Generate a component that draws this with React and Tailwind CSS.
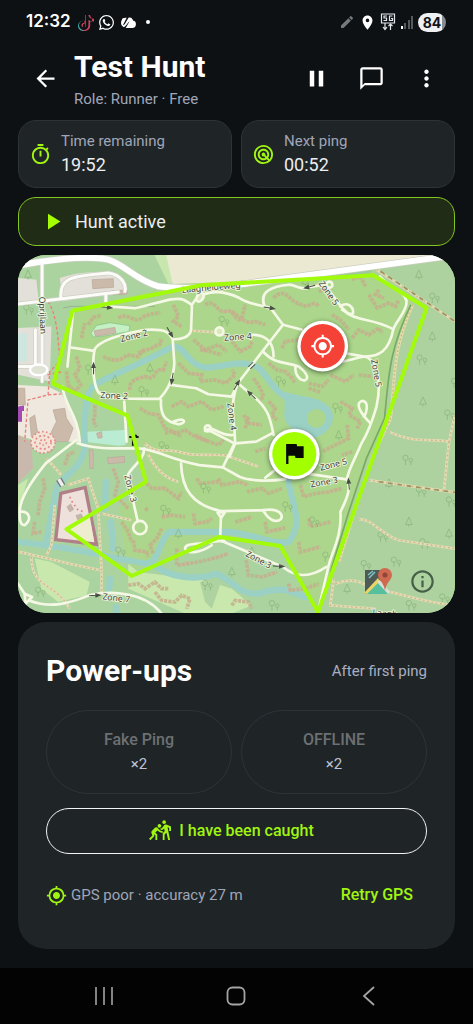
import React from "react";
import {
  MdArrowBack,
  MdPause,
  MdChatBubbleOutline,
  MdMoreVert,
  MdOutlineTimer,
  MdRadar,
  MdPlayArrow,
  MdFlag,
  MdMyLocation,
  MdSportsKabaddi,
  MdInfoOutline,
  MdEdit,
  MdLocationOn,
} from "react-icons/md";
import { FaWhatsapp, FaTiktok } from "react-icons/fa";

// Map geometry, in the units of the map's viewBox (1308 x 1074)
const water = [
  "M198 560C200 420 210 400 243 382C330 340 400 310 463 275C500 270 510 340 570 338C610 335 650 320 690 328C740 330 750 400 800 425L860 450",
  "M808 670C815 740 860 800 810 860C760 870 700 835 633 830L453 830C420 860 420 920 390 925C300 915 200 880 0 860",
  "M403 925C450 970 540 975 593 955C640 970 660 1020 720 1015C790 990 820 1010 860 1025",
  "M200 575C190 650 130 660 115 700L85 860",
  "M263 680L260 760",
  "M278 800L285 880",
  "M275 970L273 1000",
  "M293 1055L293 1074",
];

const roads = [
  "M165 170L148 335",
  "M263 155L353 160C420 145 470 125 495 135C525 150 521 150 520 170L518 225C515 250 480 255 463 253C450 230 440 222 383 225C320 235 230 260 228 290C220 350 230 400 243 415C270 432 330 432 423 432C450 405 465 370 468 325L463 253",
  "M158 278L228 288",
  "M458 390L533 400L570 418L640 425L658 385L793 210L760 165L738 155",
  "M521 150C540 110 600 100 663 130C690 148 720 150 758 160",
  "M738 155C720 110 760 95 813 90C830 90 850 110 873 97L920 90C940 120 960 150 985 175C1020 200 1060 190 1123 223",
  "M965 155C985 140 1005 155 1003 175C995 185 980 170 970 165",
  "M1083 65C1110 100 1160 110 1163 140C1165 170 1130 200 1123 225C1110 290 1080 305 1038 305C1000 310 980 325 933 325",
  "M793 210L850 225",
  "M985 296L1045 307C1085 330 1085 400 1073 455C1060 500 1050 530 1028 565C1010 610 990 640 985 670C995 700 990 720 965 770C970 840 940 890 930 930L900 1060",
  "M1055 505C1030 480 1005 445 1030 438C1055 440 1040 480 1035 485",
  "M703 240C745 240 765 265 765 305",
  "M733 290C770 330 800 320 840 335C880 365 865 385 845 373C830 360 830 350 830 332",
  "M658 385L700 420C750 460 755 490 765 540",
  "M658 385C640 430 640 470 648 525L650 565L633 605",
  "M560 528C580 505 600 545 645 540",
  "M650 565L713 560L760 535",
  "M570 525L648 565L613 637",
  "M178 565C250 590 350 575 378 582C440 595 460 615 543 630L613 637L663 665C700 680 760 678 800 672",
  "M740 668L775 640",
  "M860 655L983 673",
  "M488 625C490 700 520 750 608 768L733 765C800 755 800 800 770 797C750 795 740 775 733 765",
  "M608 768L605 850",
  "M605 855C550 870 500 860 500 880C510 900 550 890 580 870",
  "M605 855L663 880L793 935C830 965 870 970 923 935",
  "M378 580C378 620 330 640 328 665L358 797",
  "M428 435C425 480 440 500 480 508C505 505 500 490 480 495L465 500",
  "M318 440L325 560",
  "M133 395C140 455 180 480 185 560",
  "M175 555L83 625C30 690 5 740 5 770C30 765 45 790 20 810C5 810 5 790 5 770",
  "M0 985L33 1035C100 1060 150 1045 213 1020C280 1005 380 1010 430 1075",
];

const tracks = [
  "M1073 45L1308 200",
  "M1050 675L1308 712",
  "M520 228L590 232",
  "M378 565C420 600 430 580 480 590C540 610 600 590 633 605L720 635",
  "M388 595C410 640 440 670 480 680",
  "M1020 792C1060 790 1090 840 1140 855L1308 880",
  "M1110 530C1180 565 1230 550 1290 560L1308 480",
  "M1290 560L1275 705",
  "M950 985C1000 965 1030 980 1060 1000C1140 1010 1200 1040 1308 1050",
  "M945 970L935 1050L1070 1060",
  "M0 890C80 905 160 930 250 945L250 1020",
  "M250 945L240 760L210 670L150 690",
  "M40 905C40 1000 110 980 155 1060",
  "M250 775L340 795",
  "M85 900L100 870L110 750",
  "M85 610L130 660",
];

const redPaths = [
  "M90 140C115 180 120 240 125 320L95 350L90 420L30 435L20 560",
  "M90 420L130 417",
  "M88 360L133 350",
];

const houses = [
  "M210 210L225 188L250 182", "M190 250L195 225L200 205",
  "M300 190C330 170 350 210 370 190C390 175 410 180 425 172",
  "M465 150L480 185L465 200L490 215",
  "M560 150C590 130 600 180 620 170C650 160 650 210 670 190L680 150",
  "M255 305C280 320 310 320 325 300L360 305L380 280",
  "M360 295L400 280L430 265L425 250",
  "M335 405C330 370 370 370 380 365C420 380 400 340 435 345L445 320",
  "M175 305L185 340L170 360L188 390L170 410", "M145 350L150 390L180 420",
  "M525 255L560 285L600 270L625 290", "M545 285L575 290L610 300",
  "M480 325L510 355L550 360L545 380L590 375L620 385L650 360L640 345",
  "M460 455L490 440L510 455L550 440L580 465L615 455",
  "M365 460L390 475L420 480L440 520L475 535L500 525L530 545L570 560",
  "M230 450L230 480L225 500L235 515",
  "M640 170C670 190 680 210 710 200L740 210",
  "M765 130C800 90 820 150 840 145C870 170 880 130 900 155",
  "M1000 75L1025 65L1040 95", "M1050 120L1075 160L1110 145L1130 155L1140 135",
  "M900 110L935 100", "M940 180L970 200L990 225",
  "M1000 250L1020 225L1050 240L1080 220L1090 235",
  "M790 280L800 260L840 255",
  "M640 260L665 290L695 275L700 260",
  "M750 325L775 345L800 350L820 370L830 385", "M870 385L910 395L930 375",
  "M935 360L980 380L1005 360", "M1020 360L1060 365",
  "M705 370L725 400L735 425L720 440", "M750 440L770 460L760 480L775 495",
  "M675 480L690 505L730 510", "M690 485L680 520", "M870 400L905 412",
  "M965 440L1000 460L990 480L1025 500L1015 520",
  "M985 510L990 550L950 570L910 590", "M1000 590L970 600",
  "M710 590L740 580", "M685 710L730 700L750 715L790 700",
  "M845 690L855 725L890 715L930 710L970 700",
  "M740 800L745 830L800 818", "M870 790L875 815L935 800",
  "M840 860L845 890L905 875", "M650 800L700 785",
  "M600 670L610 690L660 680L690 690", "M535 670L545 685L600 680",
  "M525 775L530 805L565 800L580 790",
  "M440 535L460 530L490 545", "M530 540L560 555L600 570L615 555",
  "M385 685L400 700L440 700L480 730L490 710",
  "M430 820L415 850L395 870L405 895", "M430 785L460 780L500 785",
  "M345 855L350 885L385 890L390 905",
  "M285 640L300 680L290 720L310 740L330 760",
  "M310 800L330 830L340 860", "M380 760L390 765",
  "M475 880L475 930L540 920L600 905L630 895",
  "M330 990L360 985L380 1000L410 980L430 1000L450 1000",
  "M410 1010L430 1035L470 1040L490 1020L515 1030L505 1060",
  "M640 1050L650 1035L690 1040L700 1060",
  "M683 915L690 960L730 965L775 950", "M810 985L815 1005L860 1000L900 985",
  "M50 800L45 835L70 830", "M60 780L65 740L80 700L75 670",
  "M140 630L150 600L170 590", "M90 590L105 580",
  "M1080 105L1070 120L1095 130",
];

const buildings = [
  "M222 75L285 72L286 98L224 102Z",
  "M282 108L327 106L326 118L284 121Z",
  "M218 585L225 585L225 640L215 640L213 583Z",
  "M268 608L318 604L319 622L270 626Z",
  "M105 465L140 460L145 490L165 520L150 560L105 560L100 530L115 500Z",
  "M0 400L20 400L22 450L0 450Z",
  "M35 490L50 480L60 540L40 545Z",
  "M228 228L290 218L293 235L232 245Z",
  "M235 535L250 530L252 548L240 550Z",
];

const labels = [
  { text: "Zone 2", x: 347, y: 243, angle: -14 },
  { text: "Zone 2", x: 288, y: 422, angle: 2 },
  { text: "Zone 4", x: 658, y: 246, angle: -4 },
  { text: "Zone 4", x: 640, y: 485, angle: 83 },
  { text: "Zone 5", x: 930, y: 115, angle: 54 },
  { text: "Zone 5", x: 1073, y: 355, angle: 80 },
  { text: "Zone 5", x: 944, y: 628, angle: -14 },
  { text: "Zone 3", x: 916, y: 681, angle: -10 },
  { text: "Zone 3", x: 337, y: 700, angle: 76 },
  { text: "Zone 3", x: 720, y: 913, angle: 28 },
  { text: "Zone 7", x: 294, y: 1028, angle: 7 },
  { text: "Oprijlaan", x: 74, y: 182, angle: 88 },
  { text: "Laagheideweg", x: 578, y: 98, angle: -5 },
  { text: "Laagh", x: 1098, y: 1074, angle: 5 },
];

const arrows = [
  { x: 268, y: 158, angle: 5 },
  { x: 456, y: 235, angle: 60 },
  { x: 226, y: 338, angle: -90 },
  { x: 461, y: 374, angle: 100 },
  { x: 656, y: 388, angle: -60 },
  { x: 755, y: 160, angle: 10 },
  { x: 870, y: 97, angle: 165 },
  { x: 697, y: 418, angle: 225 },
  { x: 990, y: 684, angle: -95 },
  { x: 233, y: 1020, angle: -3 },
  { x: 783, y: 933, angle: 3 },
];

const trees = [
  [1200, 60], [1240, 130], [1202, 315], [1212, 440], [1285, 480], [1160, 615], [1110, 685],
  [1200, 710], [1290, 740], [1170, 800], [1085, 845], [1210, 865], [1290, 835], [1035, 930],
  [1125, 920], [985, 1000], [1170, 1050], [1270, 1030], [1240, 245], [1305, 385], [920, 905],
  [860, 80], [780, 380], [950, 460], [960, 540], [880, 800], [800, 755], [395, 340], [370, 410],
  [210, 345], [290, 375], [555, 700], [435, 765], [480, 835], [300, 890], [60, 1010], [30, 60],
  [25, 165], [430, 575], [640, 950], [560, 990], [760, 1050], [700, 890], [900, 310], [610, 200],
];

const route =
  "M163 168L433 115L548 92L1063 62L1223 160L898 1070L785 872L603 845L340 962L145 822L383 680L328 482L106 387Z";

const HuntMap = () => {
  return (
    <svg
      viewBox="0 0 1308 1074"
      preserveAspectRatio="xMidYMid slice"
      className="block w-full h-full font-['Noto_Sans',sans-serif]"
      role="img"
      aria-label="Map of the hunt area"
    >
      {/* Land */}
      <rect width="1308" height="1074" fill="#abd68b" />
      <path d="M0 0H470L480 90L160 165L110 390L320 480L330 570L390 680L300 760L330 950L400 925L640 835L780 870L900 1074H0Z" fill="#abd3a0" />
      <path d="M1308 0L1060 50L1175 135C1120 290 1105 360 1100 485C1085 540 1040 620 1013 705L978 855L898 1074H1308Z" fill="#add29f" />
      <path d="M408 0H443L468 85L450 88Z" fill="#c8e7ae" />
      <path d="M443 0H1308V5L690 80L463 88Z" fill="#ece9d2" />
      <path d="M600 95L1070 38L1050 58L640 90Z" fill="#9cc89b" />
      <path d="M0 70L55 75L62 140L0 150ZM125 70C200 45 300 40 325 105L135 140ZM0 220L100 215L95 380L0 360Z" fill="#e3e0da" />
      <path d="M0 235H28V320H0Z" fill="#cfe6df" />
      <path d="M0 390L90 395L130 415L175 500L185 560L60 560L0 540Z" fill="#eee8df" />
      <path d="M0 540L40 560L45 640L0 685Z" fill="#c9b9ad" />
      <path d="M0 690L30 670L0 770ZM50 910L100 920L215 980L205 1020L120 1040L70 1000Z" fill="#c9e8ad" />
      <path d="M330 925L360 950L560 975L640 1000L700 1050L640 1074H500L330 1000Z" fill="#c9e8ad" />
      <path d="M545 980L610 975L580 1060L560 1040Z" fill="#aed3a0" />
      <path d="M205 530L320 525L322 570L300 572L210 562Z" fill="#b9ecd2" />
      <path d="M218 235L235 212L275 204L335 213L332 230L270 242L225 247Z" fill="#c5f0c4" stroke="#7fc08a" strokeWidth="2" />
      <path d="M135 160L160 155H410" fill="none" stroke="#8aa487" strokeWidth="2" />

      {/* Water */}
      <g fill="none" stroke="#9bd0c4" strokeWidth="19" strokeLinecap="round">
        {water.map((d) => (
          <path key={d} d={d} />
        ))}
      </g>
      <path d="M798 410C850 430 900 420 935 460C960 500 920 550 870 550C830 530 790 510 798 470Z" fill="#9bd0c4" />
      <circle cx="893" cy="490" r="28" fill="#abd68b" />

      {/* Walled garden */}
      <path d="M128 715L201 697L235 867L113 853Z" fill="#eee0db" stroke="#b07f88" strokeWidth="10" />
      <path d="M190 790L215 785L228 860L165 852L150 820Z" fill="#efedcf" />
      <path d="M145 755L158 745L168 762L155 772ZM172 780L190 775L197 790L178 795Z" fill="#c4b4aa" />
      <path d="M155 725L162 740L180 765L200 770" fill="none" stroke="#e77f7f" strokeWidth="5" strokeDasharray="5 9" />

      {/* Buildings */}
      <g fill="none" stroke="#c6ae8d" strokeOpacity="0.85" strokeWidth="11" strokeDasharray="10 3">
        {houses.map((d) => (
          <path key={d} d={d} />
        ))}
      </g>
      <g fill="#cbb9aa" stroke="#b8a698" strokeWidth="2">
        {buildings.map((d) => (
          <path key={d} d={d} />
        ))}
      </g>

      {/* Trees */}
      <g fill="none" stroke="#87b178" strokeWidth="2">
        {trees.map(([x, y], i) => (
          <path
            key={i}
            d={
              i % 3
                ? `M${x} ${y + 15}V${y}M${x - 8} ${y - 6}a8 9 0 1 1 16 0a8 7 0 1 1 -16 0M${x + 16} ${y + 15}V${y + 5}m-5 -4a5 6 0 1 1 10 0a5 5 0 1 1 -10 0`
                : `M${x} ${y + 15}V${y + 8}H${x - 10}L${x} ${y - 14}L${x + 10} ${y + 8}H${x}`
            }
          />
        ))}
      </g>

      {/* Tracks and footpaths */}
      <g fill="none">
        {tracks.map((d) => (
          <path key={d} d={d} stroke="#dfdcb4" strokeWidth="8" />
        ))}
        {tracks.map((d) => (
          <path key={d} d={d} stroke="#d0b388" strokeWidth="4" strokeDasharray="5 8" />
        ))}
        <path d="M1085 50L1308 200M1080 680L1308 712" stroke="#a08f5f" strokeWidth="5" strokeDasharray="14 14" />
        <path d="M1181 150C1120 290 1130 360 1115 490L1060 610L1010 760L960 920" stroke="#dfdca8" strokeWidth="9" />
        <path d="M1181 150C1120 290 1130 360 1115 490L1060 610L1010 760L960 920" stroke="#c8b078" strokeWidth="4" strokeDasharray="4 8" />
        <path d="M1176 150C1110 290 1110 360 1097 490L1043 610L990 770L935 950" stroke="#78a966" strokeWidth="5" />
        {redPaths.map((d) => (
          <path key={d} d={d} stroke="#e98078" strokeWidth="4" strokeDasharray="10 6" />
        ))}
        <ellipse cx="75" cy="562" rx="36" ry="32" fill="#f3e3d6" stroke="#e58b86" strokeWidth="5" strokeDasharray="5 7" />
        <ellipse cx="75" cy="562" rx="24" ry="20" stroke="#e58b86" strokeWidth="5" strokeDasharray="6 7" />
        <ellipse cx="75" cy="562" rx="10" ry="8" stroke="#e58b86" strokeWidth="5" strokeDasharray="5 6" />
      </g>
      <path d="M0 455L18 452V468H12V500H0Z" fill="#a24bb0" />

      {/* Roads */}
      <g fill="none" strokeLinejoin="round" strokeLinecap="round">
        <path d="M-10 35C60 20 200 0 270 15C320 30 350 75 420 95C520 108 640 92 690 86L1308 2" stroke="#c9cfc0" strokeWidth="22" />
        <path d="M72 30V380M0 148L300 112M128 130C128 70 150 65 270 55C310 60 325 90 320 110M263 118V150M0 335H75M52 225V325" stroke="#cfcfc4" strokeWidth="13" />
        <path d="M-10 35C60 20 200 0 270 15C320 30 350 75 420 95C520 108 640 92 690 86L1308 2" stroke="#fff" strokeWidth="18" />
        <path d="M72 30V380M0 148L300 112M128 130C128 70 150 65 270 55C310 60 325 90 320 110M263 118V150M0 335H75M52 225V325" stroke="#fbfbf8" strokeWidth="9" />
        <ellipse cx="62" cy="345" rx="26" ry="16" fill="#dfe3d6" stroke="#fff" strokeWidth="7" />
        <g stroke="#f4f8e4" strokeWidth="8">
          {roads.map((d) => (
            <path key={d} d={d} />
          ))}
          <circle cx="365" cy="817" r="20" />
          <circle cx="603" cy="230" r="12" fill="#d8e8b8" />
          <circle cx="568" cy="520" r="9" />
          <ellipse cx="545" cy="128" rx="9" ry="14" transform="rotate(35 545 128)" fill="#d8e8b8" />
          <circle cx="932" cy="90" r="9" />
          <path d="M597 772L619 772L608 788Z" fill="#b9cf9d" />
          <path d="M592 858L605 845L618 858Z" fill="#b9cf9d" />
          <path d="M20 1015L42 1025L22 1045Z" fill="#b9cf9d" />
        </g>
        <path d="M122 672L134 692" stroke="#777" strokeWidth="18" strokeLinecap="butt" />
        <path d="M122 672L134 692" stroke="#eee" strokeWidth="10" strokeLinecap="butt" />
        <path d="M690 335L703 323M696 341L709 329" stroke="#4b5548" strokeWidth="3" />
      </g>

      {/* One-way arrows */}
      <g fill="#474d43" stroke="#474d43" strokeWidth="3">
        {arrows.map(({ x, y, angle }) => (
          <path key={`${x}-${y}`} transform={`translate(${x} ${y}) rotate(${angle})`} d="M-20 0H0V-5L13 0L0 5V0" />
        ))}
      </g>

      {/* Street names */}
      <g fontSize="26" fill="#3f443b" stroke="#eef5dc" strokeWidth="5" paintOrder="stroke" textAnchor="middle">
        {labels.map(({ text, x, y, angle }) => (
          <text key={`${x}-${y}`} transform={`translate(${x} ${y}) rotate(${angle})`} dy="9">
            {text}
          </text>
        ))}
      </g>

      {/* Hunt boundary */}
      <path d="M347 548L355 540M333 546H361M344 532V572" stroke="#111" strokeWidth="6" fill="none" />
      <path d={route} fill="none" stroke="#a2fb0b" strokeWidth="12" strokeLinejoin="round" />

      {/* Player and flag markers */}
      <g className="drop-shadow-[0_4px_8px_rgba(0,0,0,0.5)]">
        <circle cx="912" cy="274" r="76" fill="#fff" />
        <circle cx="827" cy="597" r="76" fill="#fff" />
      </g>
      <circle cx="912" cy="274" r="66" fill="#f44336" />
      <MdMyLocation x="875" y="237" size={74} color="#fff" />
      <circle cx="827" cy="597" r="66" fill="#a3ff00" />
      <MdFlag x="785" y="553" size={84} color="#050805" />
    </svg>
  );
};

const StatusBar = () => {
  return (
    <div className="flex items-center justify-between h-[44px] pl-[26px] pr-[27px] text-white">
      <div className="flex items-center gap-[5px]">
        <span className="mr-0.5 font-['Inter',sans-serif] text-[17px] font-semibold">12:32</span>
        <span className="relative size-[15px]">
          <FaTiktok size={16} className="absolute -left-px text-[#3fb6ad]" />
          <FaTiktok size={16} className="absolute left-px text-[#d5405c]" />
          <FaTiktok size={15} className="absolute text-[#0d1114]" />
        </span>
        <FaWhatsapp size={17} />
        <svg width="17" height="13" viewBox="0 0 18 14" fill="currentColor">
          <path d="M4 12A5 5 0 0 1 1 7C1 4 4 2 7 2L3 10C4 10 5 9 6 7L9 2C11 1 13 2 14 5C17 5 17 8 17 9C17 12 15 13 13 13H6L10 6C8 7 6 12 4 12Z" />
          <path d="M2 3L5 2L2 6Z" />
        </svg>
        <span className="ml-1 size-1 rounded-full bg-white" />
      </div>
      <div className="flex items-center gap-1">
        <MdEdit size={16} className="text-[#77797b]" />
        <MdLocationOn size={17} />
        <svg width="16" height="18" viewBox="0 0 16 18" fill="none" stroke="#e5e7eb" strokeWidth="1.2">
          <path d="M1.5 1H14.500V10H1.500ZM7 3H4V5H6.500V7.500H3.500M12.500 3H9.500V7.500H12.500V5.500H11" />
          <path d="M5 10V16M3 14L5 16.500L7 14M10.500 17V11M8.500 13L10.500 11L12.500 13" />
        </svg>
        <svg width="14" height="14" viewBox="0 0 14 14" fill="#56595c">
          <rect x="1" y="11" width="2" height="3" fill="#fff" />
          <rect x="4" y="8" width="2" height="6" />
          <rect x="8" y="5" width="2" height="9" />
          <rect x="11" y="1" width="2" height="13" />
        </svg>
        <span className="flex h-[19px] w-[28px] items-center justify-center rounded-full bg-linear-to-r from-[#eef0f2] from-84% to-[#8a8d90] to-84% font-['Inter',sans-serif] text-[14px] font-bold text-[#111417]">
          84
        </span>
      </div>
    </div>
  );
};

const Header = () => {
  return (
    <header className="flex items-center h-[68px] pl-[18px] pr-[19px] text-white">
      <button aria-label="Back" className="flex h-12 w-[55px] items-center justify-center">
        <MdArrowBack size={27} />
      </button>
      <div className="flex-grow pt-0.5 pl-px">
        <h1 className="text-[30px] leading-9 font-bold">Test Hunt</h1>
        <p className="mt-1 text-[15px] leading-5 text-[#a0a6b8]">Role: Runner · Free</p>
      </div>
      <button aria-label="Pause" className="flex h-12 w-[55px] items-center justify-center">
        <MdPause size={27} />
      </button>
      <button aria-label="Chat" className="flex h-12 w-[55px] items-center justify-center">
        <MdChatBubbleOutline size={27} />
      </button>
      <button aria-label="More" className="flex h-12 w-[55px] items-center justify-center">
        <MdMoreVert size={27} />
      </button>
    </header>
  );
};

const StatCard = ({ icon, label, value }) => {
  return (
    <div className="flex items-center gap-[9px] h-[68px] px-[10px] rounded-[18px] border border-[#2d3337] bg-[#1f2427]">
      <span className="text-[#a0f511]">{icon}</span>
      <div>
        <p className="text-[15px] leading-5 text-[#a0a6b8]">{label}</p>
        <p className="mt-0.5 text-[18px] leading-6 text-[#eceef2]">{value}</p>
      </div>
    </div>
  );
};

const PowerUpButton = ({ name, count }) => {
  return (
    <button
      disabled
      className="flex h-[84px] flex-col items-center justify-center gap-1 rounded-full border border-[#2d3337]"
    >
      <span className="text-[16px] leading-5 font-medium text-[#6d7073]">{name}</span>
      <span className="text-[15px] leading-5 text-[#bcc3d6]">×{count}</span>
    </button>
  );
};

const PowerUps = () => {
  return (
    <section className="mt-[9px] rounded-[28px] bg-[#1f2427] px-7 py-[27px]">
      <div className="flex h-11 items-center justify-between">
        <h2 className="text-[30px] leading-9 font-bold text-white">Power-ups</h2>
        <span className="text-[15px] leading-5 text-[#a9afc2]">After first ping</span>
      </div>
      <div className="mt-[17px] grid grid-cols-2 gap-[9px]">
        <PowerUpButton name="Fake Ping" count={2} />
        <PowerUpButton name="OFFLINE" count={2} />
      </div>
      <button className="mt-[14px] flex h-[46px] w-full items-center justify-center gap-2 rounded-full border border-[#f1f3f4] pr-[10px] text-[16px] font-medium text-[#a0f511]">
        <MdSportsKabaddi size={22} />
        I have been caught
      </button>
      <div className="mt-[14px] flex h-[54px] items-center justify-between">
        <div className="flex items-center gap-1 text-[15px] text-[#a0a6b8]">
          <MdMyLocation size={21} className="text-[#a0f511]" />
          GPS poor · accuracy 27 m
        </div>
        <button className="px-[14px] py-2 text-[16px] font-medium text-[#a0f511]">Retry GPS</button>
      </div>
    </section>
  );
};

const SystemNav = () => {
  return (
    <nav className="mt-auto grid h-[56px] grid-cols-3 items-center bg-[#030304] px-[38px] text-[#a3a4a6]">
      <button aria-label="Recents" className="flex justify-center">
        <svg width="20" height="20" viewBox="0 0 20 20" stroke="currentColor" strokeWidth="1.6">
          <path d="M2 1V19M10 1V19M18 1V19" />
        </svg>
      </button>
      <button aria-label="Home" className="flex justify-center">
        <svg width="20" height="20" viewBox="0 0 20 20" fill="none" stroke="currentColor" strokeWidth="1.8">
          <rect x="1.500" y="1.500" width="17" height="17" rx="5" />
        </svg>
      </button>
      <button aria-label="Back" className="flex justify-center">
        <svg width="20" height="20" viewBox="0 0 20 20" fill="none" stroke="currentColor" strokeWidth="1.8">
          <path d="M15 1L5 10L15 19" />
        </svg>
      </button>
    </nav>
  );
};

const App = () => {
  return (
    <div className="flex min-h-screen flex-col bg-[#0d1114] font-['Roboto',sans-serif]">
      <StatusBar />
      <Header />

      <main className="px-[18px] pt-2 pb-[18px]">
        {/* Timers */}
        <div className="grid grid-cols-2 gap-[9px]">
          <StatCard icon={<MdOutlineTimer size={23} />} label="Time remaining" value="19:52" />
          <StatCard icon={<MdRadar size={23} />} label="Next ping" value="00:52" />
        </div>

        {/* Hunt state */}
        <div className="mt-[9px] flex h-[49px] items-center gap-[9px] rounded-[18px] border border-[#85c522] bg-[#202c15] px-5 text-[18px] text-[#eceef2]">
          <MdPlayArrow size={27} className="text-[#a6ff00]" />
          Hunt active
        </div>

        {/* Map */}
        <div className="relative mt-[9px] aspect-[437/358] overflow-hidden rounded-[28px]">
          <HuntMap />
          <a href="#maps" aria-label="Open in Maps" className="absolute right-[62px] bottom-[17px]">
            <svg width="30" height="30" viewBox="0 0 30 30">
              <path d="M2 4H20V14L2 28Z" fill="#4e5a55" />
              <path d="M5 9L10 5M6 12L12 6" stroke="#7fc5c6" strokeWidth="1.5" />
              <path d="M2 28L14 16L26 28Z" fill="#56bf9d" />
              <path d="M1 27L15 12L17 15L4 28Z" fill="#e9d465" />
              <path d="M14 16L17 14L27 26L25 28Z" fill="#d9e0d8" />
              <path d="M22 2A7 7 0 0 0 15 9C15 14 21 16 22 25C23 16 29 14 29 9A7 7 0 0 0 22 2Z" fill="#cf6a51" />
              <circle cx="22" cy="9" r="2.500" fill="#8d4637" />
            </svg>
          </a>
          <button aria-label="Map information" className="absolute right-[19px] bottom-[18px] text-[#48604a]">
            <MdInfoOutline size={27} />
          </button>
        </div>

        <PowerUps />
      </main>

      <SystemNav />
    </div>
  );
};

export default App;
